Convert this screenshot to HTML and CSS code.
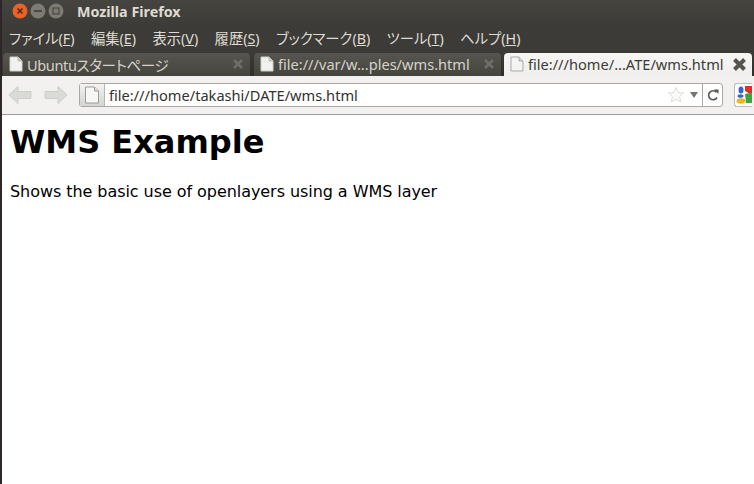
FILE: index.html
```html
<!DOCTYPE html>
<html lang="ja">
<head>
<meta charset="utf-8">
<title>Mozilla Firefox</title>
<link rel="stylesheet" href="styles.css">
</head>
<body>
<div class="window">
  <header class="titlebar">
    <div class="controls">
      <svg class="ctl" viewBox="0 0 16 16"><circle cx="8" cy="8" r="7.500" fill="#e9622a"/><path d="M5.500 5.500l5 5M10.500 5.500l-5 5" stroke="#5a2410" stroke-width="1.500"/></svg>
      <svg class="ctl" viewBox="0 0 16 16"><circle cx="8" cy="8" r="7.500" fill="#7d7b72"/><path d="M4 8h8" stroke="#3a3934" stroke-width="1.500"/></svg>
      <svg class="ctl" viewBox="0 0 16 16"><circle cx="8" cy="8" r="7.500" fill="#7d7b72"/><rect x="5" y="5" width="6" height="6" fill="none" stroke="#3f3e39"/></svg>
    </div>
    <span class="title">Mozilla Firefox</span>
  </header>
  <nav class="menubar">
    <span class="menu">ファイル(<u>F</u>)</span>
    <span class="menu">編集(<u>E</u>)</span>
    <span class="menu">表示(<u>V</u>)</span>
    <span class="menu">履歴(<u>S</u>)</span>
    <span class="menu">ブックマーク(<u>B</u>)</span>
    <span class="menu">ツール(<u>T</u>)</span>
    <span class="menu">ヘルプ(<u>H</u>)</span>
  </nav>
  <div class="tabstrip">
    <div class="tab">
      <svg class="page" viewBox="0 0 16 16"><path d="M2 1h8l4 4v10H2z" fill="#f1f1ef" stroke="#cfcfca"/><path d="M10 1v4h4" fill="#c9c9c4" stroke="#bdbdb8"/></svg>
      <span class="tab-label tab-label-ja">Ubuntuスタートページ</span>
      <svg class="close" viewBox="0 0 12 12"><path d="M2 2l8 8M10 2l-8 8" stroke="#6f6e68" stroke-width="2.500"/></svg>
    </div>
    <div class="tab">
      <svg class="page" viewBox="0 0 16 16"><path d="M2 1h8l4 4v10H2z" fill="#f1f1ef" stroke="#cfcfca"/><path d="M10 1v4h4" fill="#c9c9c4" stroke="#bdbdb8"/></svg>
      <span class="tab-label">file:///var/w...ples/wms.html</span>
      <svg class="close" viewBox="0 0 12 12"><path d="M2 2l8 8M10 2l-8 8" stroke="#6f6e68" stroke-width="2.500"/></svg>
    </div>
    <div class="tab active">
      <svg class="page" viewBox="0 0 16 16"><path d="M2 1h8l4 4v10H2z" fill="#f4f4f2" stroke="#a9a9a4"/><path d="M10 1v4h4" fill="#ddd" stroke="#a9a9a4"/></svg>
      <span class="tab-label">file:///home/...ATE/wms.html</span>
      <svg class="close close-active" viewBox="0 0 12 12"><path d="M2 2l8 8M10 2l-8 8" stroke="#55544f" stroke-width="3.200"/></svg>
    </div>
  </div>
  <div class="toolbar">
    <svg class="arrow" viewBox="0 0 24 20"><path d="M1 10l9-8.500v5h13v7H10v5z" fill="#dadad7" stroke="#cdcdca" stroke-linejoin="round"/></svg>
    <svg class="arrow arrow-fwd" viewBox="0 0 24 20"><path d="M23 10l-9-8.500v5H1v7h13v5z" fill="#dadad7" stroke="#cdcdca" stroke-linejoin="round"/></svg>
    <div class="urlbar">
      <span class="identity">
        <svg class="page-big" viewBox="0 0 16 18"><path d="M1.500 1h9l4 4v12h-13z" fill="#f7f7f5" stroke="#9c9c98"/><path d="M10.500 1v4h4" fill="#e2e2df" stroke="#9c9c98"/></svg>
      </span>
      <span class="url">file:///home/takashi/DATE/wms.html</span>
      <svg class="star" viewBox="0 0 18 18"><path d="M9 1.500l2.300 5 5.200.6-3.900 3.500 1.100 5.200L9 13.200l-4.700 2.600 1.100-5.200L1.500 7.100l5.200-.6z" fill="#fbfbfa" stroke="#dcdcd8"/></svg>
      <svg class="drop" viewBox="0 0 8 6"><path d="M0 0h8L4 6z" fill="#77756f"/></svg>
      <span class="reload">
        <svg viewBox="0 0 14 14" width="14" height="14"><path d="M10.500 4.200A4.500 4.500 0 1 0 11 9.500" fill="none" stroke="#55544f" stroke-width="1.600"/><path d="M8 1.500h4.500v4.500z" fill="#55544f"/></svg>
      </span>
    </div>
    <span class="search">
      <svg viewBox="0 0 20 20" width="20" height="20"><ellipse cx="5" cy="5" rx="2.500" ry="3.500" fill="#3467c8"/><path d="M9 1h9v7l-4 1-5-3z" fill="#d8342a"/><path d="M9 9l5-1 5 1v9H10z" fill="#3fa344"/><ellipse cx="4.500" cy="11" rx="3" ry="1.800" fill="#3467c8"/><ellipse cx="5" cy="16" rx="4.500" ry="2.800" fill="#efb326"/></svg>
    </span>
  </div>
  <main class="content">
    <h1 class="heading">WMS Example</h1>
    <p class="lead">Shows the basic use of openlayers using a WMS layer</p>
  </main>
</div>
</body>
</html>
```
FILE: styles.css
```css
* { box-sizing: border-box; }
html, body { margin: 0; height: 100%; overflow: hidden; }
body { width: 754px; height: 484px; background: #fff; }
.window {
  width: 754px;
  height: 484px;
  border-left: 2px solid #2f2629;
  display: flex;
  flex-direction: column;
  font-family: "Noto Sans", "Noto Sans CJK JP", sans-serif;
  font-feature-settings: "palt";
}
.titlebar {
  height: 27px;
  flex: none;
  display: flex;
  align-items: center;
  padding: 0 0 5px 10px;
  background: linear-gradient(#45443f, #3c3b37);
}
.controls { display: flex; gap: 2px; }
.ctl { width: 16px; height: 16px; display: block; }
.title {
  margin-left: 13px;
  font: bold 14.300px "Noto Sans", sans-serif;
  color: #dfdbd2;
}
.menubar {
  height: 25px;
  flex: none;
  display: flex;
  align-items: center;
  gap: 16.400px;
  padding: 0 0 4px 7px;
  background: #3c3b37;
  color: #dfdbd2;
  font-size: 14.300px;
  white-space: nowrap;
}
.tabstrip {
  height: 24px;
  flex: none;
  display: flex;
  gap: 4px;
  padding-left: 1px;
  background: linear-gradient(#3c3b37, #2f2e2a);
}
.tab {
  width: 247px;
  height: 24px;
  margin-top: 1px;
  display: flex;
  align-items: center;
  padding: 0 5px 2px;
  border-radius: 4px 4px 0 0;
  background: linear-gradient(#57554f, #45433e);
  color: #d5d2ca;
  font-size: 14.600px;
  white-space: nowrap;
}
.tab.active {
  width: 248px;
  margin-left: -1px;
  background: linear-gradient(#f6f5f3, #f0efed);
  color: #3c3b37;
}
.page { width: 16px; height: 16px; flex: none; }
.tab-label { margin-left: 3px; flex: 1; overflow: hidden; }
.tab-label-ja { letter-spacing: -0.4px; }
.close { width: 12px; height: 12px; flex: none; margin-right: 1px; }
.close-active { width: 15px; height: 15px; margin-right: 0; }
.toolbar {
  height: 39px;
  flex: none;
  display: flex;
  align-items: center;
  padding-left: 6px;
  background: #f2f1ef;
  border-bottom: 1px solid #9a9a98;
}
.arrow { width: 24px; height: 20px; flex: none; margin-right: 12px; }
.arrow-fwd { margin-right: 11px; }
.urlbar {
  width: 644px;
  height: 24px;
  flex: none;
  display: flex;
  align-items: center;
  background: #fff;
  border: 1px solid #a9a8a4;
  border-radius: 3px;
}
.identity {
  width: 25px;
  height: 22px;
  flex: none;
  display: flex;
  align-items: center;
  justify-content: center;
  background: linear-gradient(#f3f3f1, #d4d4d1);
  border-right: 1px solid #b5b5b1;
}
.page-big { width: 16px; height: 18px; }
.url {
  flex: 1;
  margin-left: 4px;
  font-size: 14.600px;
  color: #33322e;
  white-space: nowrap;
}
.star { width: 18px; height: 18px; flex: none; }
.drop { width: 8px; height: 6px; flex: none; margin-left: 5px; }
.reload {
  width: 20px;
  height: 22px;
  margin-left: 4px;
  flex: none;
  display: flex;
  align-items: center;
  justify-content: center;
  border-left: 1px solid #a9a8a4;
}
.search {
  width: 18px;
  height: 24px;
  flex: none;
  margin-left: 11px;
  padding: 1px 0 0 1px;
  background: #fff;
  border: 1px solid #bdbcb8;
  border-right: 0;
  border-radius: 3px 0 0 3px;
  overflow: hidden;
}
.content {
  flex: 1;
  padding: 0 8px;
  background: #fff;
  color: #000;
  font-family: "DejaVu Sans", sans-serif;
  font-feature-settings: normal;
}
.heading {
  margin: 8px 0 0;
  font-size: 32px;
  line-height: 38px;
  font-weight: bold;
}
.lead {
  margin: 21px 0 0;
  font-size: 16px;
  line-height: 19px;
  letter-spacing: -0.06px;
}
```
